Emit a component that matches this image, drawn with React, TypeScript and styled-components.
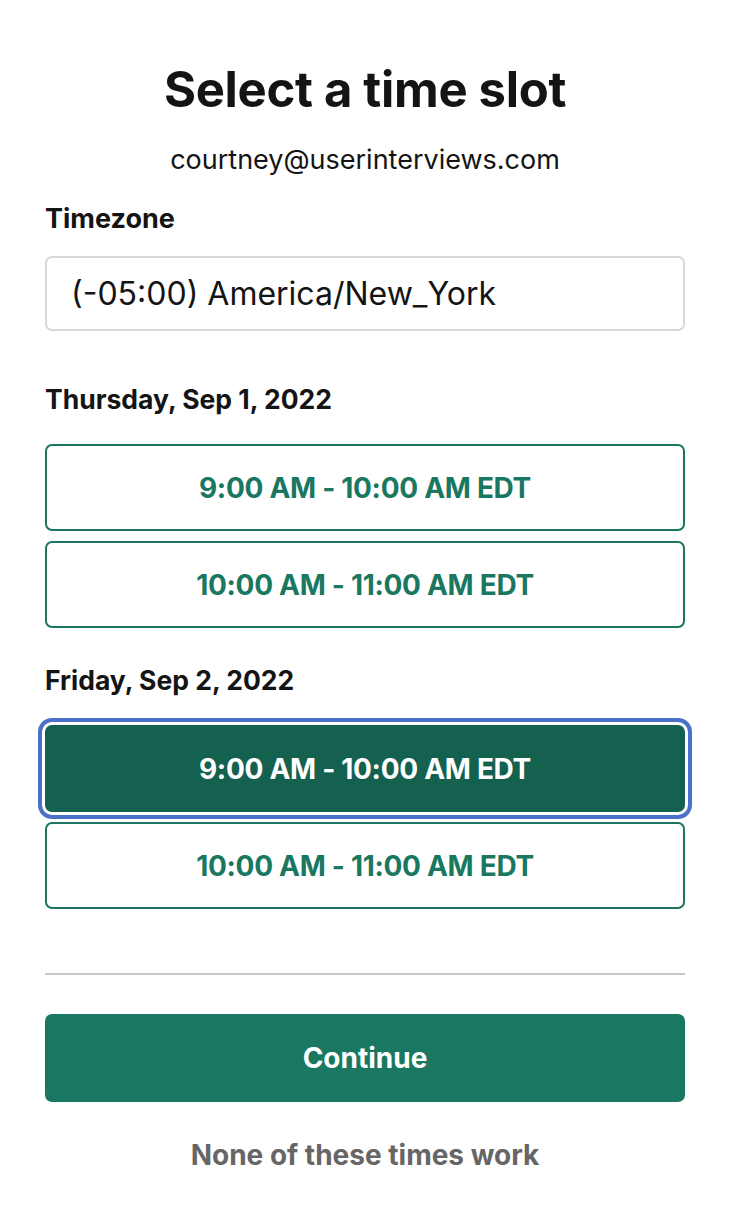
import React from "react";
import styled, { createGlobalStyle } from "styled-components";

const Global = createGlobalStyle`
  html, body { margin: 0; padding: 0; background: #ffffff; }
  body { font-family: Inter, "Noto Sans", sans-serif; color: #141414; }
  * { box-sizing: border-box; }
`;

const Page = styled.main`
  display: flex;
  flex-direction: column;
  padding: 60px 47px 40px 45px;
`;

const Title = styled.h1`
  margin: 0;
  text-align: center;
  font-size: 49px;
  line-height: 60px;
  font-weight: 700;
  letter-spacing: -0.3px;
  color: #141414;
`;

const Email = styled.p`
  margin: 22px 0 0;
  text-align: center;
  font-size: 27px;
  line-height: 36px;
  color: #141414;
`;

const Label = styled.div`
  margin-top: 25px;
  font-size: 27px;
  line-height: 32px;
  font-weight: 700;
  color: #141414;
`;

const Select = styled.div`
  margin-top: 21px;
  height: 75px;
  border: 2px solid #d6d9d9;
  border-radius: 7px;
  display: flex;
  align-items: center;
  padding: 0 24px;
  font-size: 32px;
  color: #141414;
`;

const DateHeader = styled.h2<{ $first?: boolean }>`
  margin: ${(p) => (p.$first ? "52px" : "36px")} 0 0;
  font-size: 26.5px;
  line-height: 32px;
  font-weight: 700;
  color: #141414;
`;

const SlotList = styled.div`
  display: flex;
  flex-direction: column;
  gap: 10px;
  margin-top: 29px;
`;

const Slot = styled.button<{ $selected?: boolean }>`
  height: 87px;
  width: 100%;
  border-radius: 7px;
  border: 2px solid ${(p) => (p.$selected ? "#156150" : "#1b7560")};
  background: ${(p) => (p.$selected ? "#156150" : "#ffffff")};
  color: ${(p) => (p.$selected ? "#ffffff" : "#1a7760")};
  font-family: inherit;
  font-size: 28px;
  font-weight: 700;
  letter-spacing: -0.3px;
  box-shadow: ${(p) =>
    p.$selected ? "0 0 0 3px #ffffff, 0 0 0 7px #4a70c9" : "none"};
  cursor: pointer;
`;

const Divider = styled.hr`
  margin: 64px 0 0;
  border: none;
  border-top: 2px solid #c9c9c9;
`;

const Continue = styled.button`
  margin-top: 39px;
  height: 88px;
  border: none;
  border-radius: 7px;
  background: #1a7862;
  color: #ffffff;
  font-family: inherit;
  font-size: 28px;
  font-weight: 700;
  cursor: pointer;
`;

const Secondary = styled.button`
  margin-top: 34px;
  background: none;
  border: none;
  color: #666666;
  font-family: inherit;
  font-size: 28px;
  font-weight: 700;
  line-height: 36px;
  cursor: pointer;
`;

const days = [
  {
    date: "Thursday, Sep 1, 2022",
    slots: ["9:00 AM - 10:00 AM EDT", "10:00 AM - 11:00 AM EDT"],
  },
  {
    date: "Friday, Sep 2, 2022",
    slots: ["9:00 AM - 10:00 AM EDT", "10:00 AM - 11:00 AM EDT"],
  },
];

export default function App() {
  return (
    <>
      <Global />
      <Page>
        <Title>Select a time slot</Title>
        <Email>courtney@userinterviews.com</Email>
        <Label>Timezone</Label>
        <Select>(-05:00) America/New_York</Select>
        {days.map((d, i) => (
          <React.Fragment key={d.date}>
            <DateHeader $first={i === 0}>{d.date}</DateHeader>
            <SlotList>
              {d.slots.map((s, j) => (
                <Slot key={s} $selected={i === 1 && j === 0}>
                  {s}
                </Slot>
              ))}
            </SlotList>
          </React.Fragment>
        ))}
        <Divider />
        <Continue>Continue</Continue>
        <Secondary>None of these times work</Secondary>
      </Page>
    </>
  );
}
